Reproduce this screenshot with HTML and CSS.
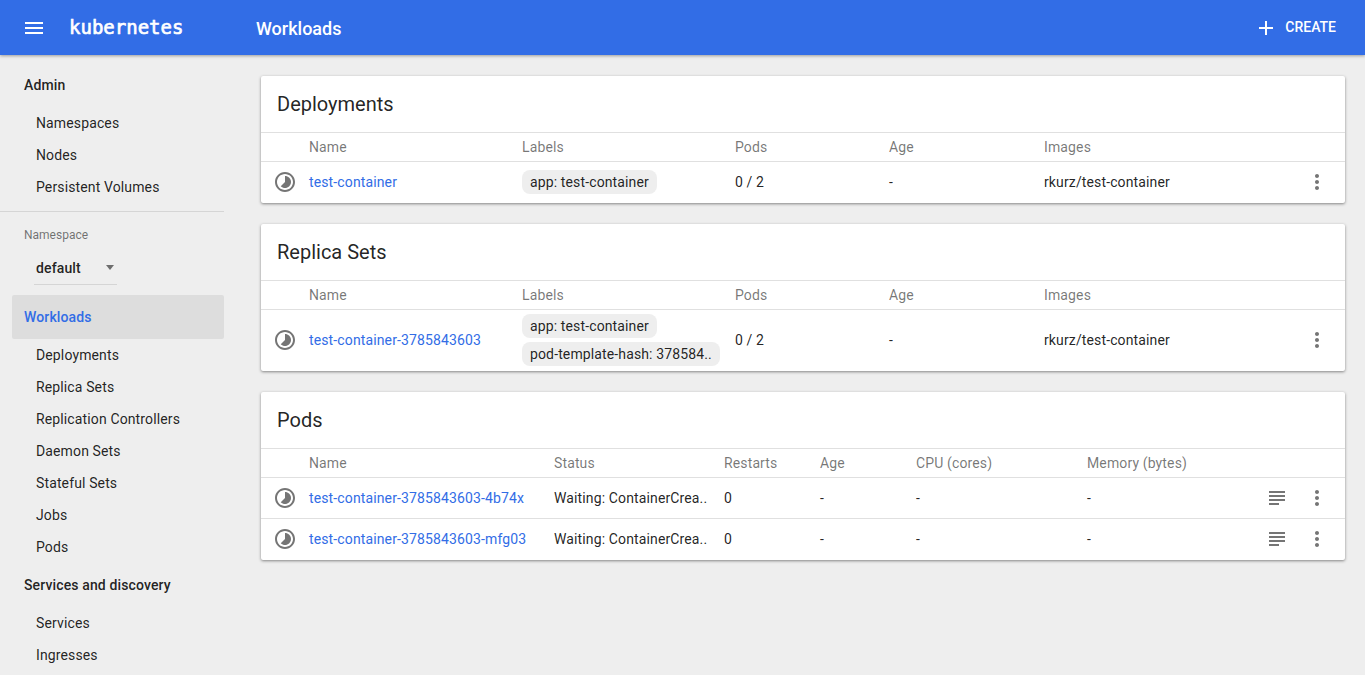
FILE: index.html
```html
<!DOCTYPE html>
<html lang="en">
<head>
<meta charset="utf-8">
<title>Workloads - Kubernetes Dashboard</title>
<link rel="stylesheet" href="styles.css">
</head>
<body>
<header class="toolbar">
  <svg class="icon menu-icon" viewBox="0 0 24 24"><path d="M3 18h18v-2H3v2zm0-5h18v-2H3v2zm0-7v2h18V6H3z"/></svg>
  <span class="logo">kubernetes</span>
  <h1 class="page-title">Workloads</h1>
  <button class="create"><svg class="icon" viewBox="0 0 24 24"><path d="M19 13h-6v6h-2v-6H5v-2h6V5h2v6h6v2z"/></svg><span>CREATE</span></button>
</header>
<div class="layout">
  <nav class="sidebar">
    <div class="nav-head">Admin</div>
    <a class="nav-item">Namespaces</a>
    <a class="nav-item">Nodes</a>
    <a class="nav-item">Persistent Volumes</a>
    <hr class="nav-sep">
    <div class="ns-label">Namespace</div>
    <div class="ns-select"><span>default</span><i class="caret"></i></div>
    <div class="nav-head nav-active">Workloads</div>
    <a class="nav-item">Deployments</a>
    <a class="nav-item">Replica Sets</a>
    <a class="nav-item">Replication Controllers</a>
    <a class="nav-item">Daemon Sets</a>
    <a class="nav-item">Stateful Sets</a>
    <a class="nav-item">Jobs</a>
    <a class="nav-item">Pods</a>
    <div class="nav-head">Services and discovery</div>
    <a class="nav-item">Services</a>
    <a class="nav-item">Ingresses</a>
  </nav>
  <main class="content">
    <section class="card">
      <h2 class="card-title">Deployments</h2>
      <div class="row head cols-a"><span></span><span>Name</span><span>Labels</span><span>Pods</span><span>Age</span><span>Images</span><span></span></div>
      <div class="row cols-a">
        <svg class="icon status" viewBox="0 0 24 24"><path d="M16.24 7.76C15.07 6.59 13.54 6 12 6v6l-4.24 4.24c2.34 2.34 6.14 2.34 8.49 0 2.34-2.34 2.34-6.14-.01-8.48zM12 2C6.48 2 2 6.48 2 12s4.48 10 10 10 10-4.48 10-10S17.52 2 12 2zm0 18c-4.42 0-8-3.58-8-8s3.58-8 8-8 8 3.58 8 8-3.58 8-8 8z"/></svg>
        <a class="link">test-container</a>
        <div class="chips"><span class="chip">app: test-container</span></div>
        <span>0 / 2</span><span>-</span><span>rkurz/test-container</span>
        <div class="actions"><svg class="icon" viewBox="0 0 24 24"><path d="M12 8c1.1 0 2-.9 2-2s-.9-2-2-2-2 .9-2 2 .9 2 2 2zm0 2c-1.1 0-2 .9-2 2s.9 2 2 2 2-.9 2-2-.9-2-2-2zm0 6c-1.1 0-2 .9-2 2s.9 2 2 2 2-.9 2-2-.9-2-2-2z"/></svg></div>
      </div>
    </section>
    <section class="card">
      <h2 class="card-title">Replica Sets</h2>
      <div class="row head cols-a"><span></span><span>Name</span><span>Labels</span><span>Pods</span><span>Age</span><span>Images</span><span></span></div>
      <div class="row cols-a">
        <svg class="icon status" viewBox="0 0 24 24"><path d="M16.24 7.76C15.07 6.59 13.54 6 12 6v6l-4.24 4.24c2.34 2.34 6.14 2.34 8.49 0 2.34-2.34 2.34-6.14-.01-8.48zM12 2C6.48 2 2 6.48 2 12s4.48 10 10 10 10-4.48 10-10S17.52 2 12 2zm0 18c-4.42 0-8-3.58-8-8s3.58-8 8-8 8 3.58 8 8-3.58 8-8 8z"/></svg>
        <a class="link">test-container-3785843603</a>
        <div class="chips"><span class="chip">app: test-container</span><span class="chip">pod-template-hash: 378584..</span></div>
        <span>0 / 2</span><span>-</span><span>rkurz/test-container</span>
        <div class="actions"><svg class="icon" viewBox="0 0 24 24"><path d="M12 8c1.1 0 2-.9 2-2s-.9-2-2-2-2 .9-2 2 .9 2 2 2zm0 2c-1.1 0-2 .9-2 2s.9 2 2 2 2-.9 2-2-.9-2-2-2zm0 6c-1.1 0-2 .9-2 2s.9 2 2 2 2-.9 2-2-.9-2-2-2z"/></svg></div>
      </div>
    </section>
    <section class="card">
      <h2 class="card-title">Pods</h2>
      <div class="row head cols-b"><span></span><span>Name</span><span>Status</span><span>Restarts</span><span>Age</span><span>CPU (cores)</span><span>Memory (bytes)</span><span></span></div>
      <div class="row cols-b">
        <svg class="icon status" viewBox="0 0 24 24"><path d="M16.24 7.76C15.07 6.59 13.54 6 12 6v6l-4.24 4.24c2.34 2.34 6.14 2.34 8.49 0 2.34-2.34 2.34-6.14-.01-8.48zM12 2C6.48 2 2 6.48 2 12s4.48 10 10 10 10-4.48 10-10S17.52 2 12 2zm0 18c-4.42 0-8-3.58-8-8s3.58-8 8-8 8 3.58 8 8-3.58 8-8 8z"/></svg>
        <a class="link">test-container-3785843603-4b74x</a>
        <span>Waiting: ContainerCrea..</span><span>0</span><span>-</span><span>-</span><span>-</span>
        <div class="actions"><svg class="icon" viewBox="0 0 24 24"><path d="M14 17H4v2h10v-2zm6-8H4v2h16V9zM4 15h16v-2H4v2zM4 5v2h16V5H4z"/></svg><svg class="icon" viewBox="0 0 24 24"><path d="M12 8c1.1 0 2-.9 2-2s-.9-2-2-2-2 .9-2 2 .9 2 2 2zm0 2c-1.1 0-2 .9-2 2s.9 2 2 2 2-.9 2-2-.9-2-2-2zm0 6c-1.1 0-2 .9-2 2s.9 2 2 2 2-.9 2-2-.9-2-2-2z"/></svg></div>
      </div>
      <div class="row cols-b">
        <svg class="icon status" viewBox="0 0 24 24"><path d="M16.24 7.76C15.07 6.59 13.54 6 12 6v6l-4.24 4.24c2.34 2.34 6.14 2.34 8.49 0 2.34-2.34 2.34-6.14-.01-8.48zM12 2C6.48 2 2 6.48 2 12s4.48 10 10 10 10-4.48 10-10S17.52 2 12 2zm0 18c-4.42 0-8-3.58-8-8s3.58-8 8-8 8 3.58 8 8-3.58 8-8 8z"/></svg>
        <a class="link">test-container-3785843603-mfg03</a>
        <span>Waiting: ContainerCrea..</span><span>0</span><span>-</span><span>-</span><span>-</span>
        <div class="actions"><svg class="icon" viewBox="0 0 24 24"><path d="M14 17H4v2h10v-2zm6-8H4v2h16V9zM4 15h16v-2H4v2zM4 5v2h16V5H4z"/></svg><svg class="icon" viewBox="0 0 24 24"><path d="M12 8c1.1 0 2-.9 2-2s-.9-2-2-2-2 .9-2 2 .9 2 2 2zm0 2c-1.1 0-2 .9-2 2s.9 2 2 2 2-.9 2-2-.9-2-2-2zm0 6c-1.1 0-2 .9-2 2s.9 2 2 2 2-.9 2-2-.9-2-2-2z"/></svg></div>
      </div>
    </section>
  </main>
</div>
</body>
</html>
```
FILE: styles.css
```css
* { box-sizing: border-box; }
html, body { height: 100%; }
body {
  margin: 0;
  height: 675px;
  overflow: hidden;
  display: flex;
  flex-direction: column;
  background: #eeeeee;
  color: rgba(0, 0, 0, 0.87);
  font: 14px/20px Roboto, sans-serif;
  letter-spacing: 0.13px;
}
.icon { width: 24px; height: 24px; fill: currentColor; display: block; flex: none; }

.toolbar {
  flex: none;
  position: relative;
  z-index: 2;
  height: 55px;
  display: flex;
  align-items: center;
  padding: 0 16px 0 22px;
  background: #326de6;
  color: #fff;
  box-shadow: 0 1px 3px rgba(0, 0, 0, 0.35);
}
.menu-icon { width: 24px; height: 24px; }
.logo {
  margin-left: 23px;
  padding-bottom: 2px;
  width: 187px;
  letter-spacing: 0;
  font: 400 19px/24px "DejaVu Sans Mono", monospace;
  -webkit-text-stroke: 0.65px #fff;
}
.page-title {
  margin: 0;
  padding-top: 2px;
  font-size: 18px;
  font-weight: 500;
  line-height: 24px;
  letter-spacing: 0;
}
.create {
  margin-left: auto;
  display: flex;
  align-items: center;
  gap: 7px;
  padding: 0 13px 0 0;
  height: 36px;
  border: 0;
  background: none;
  color: #fff;
  letter-spacing: 0;
  font: 500 14px/20px Roboto, sans-serif;
}
.create span { position: relative; top: -1px; }

.layout { flex: 1; display: flex; min-height: 0; }
.sidebar { flex: none; width: 224px; padding-top: 8px; }
.nav-head {
  height: 44px;
  padding-left: 24px;
  display: flex;
  align-items: center;
  font-weight: 500;
}
.nav-item {
  display: flex;
  align-items: center;
  height: 32px;
  padding-left: 36px;
  color: rgba(0, 0, 0, 0.87);
}
.nav-sep { margin: 8px 0 0; border: 0; border-top: 1px solid #d5d5d5; }
.ns-label {
  margin-top: 13px;
  padding-left: 24px;
  font-size: 12px;
  line-height: 20px;
  letter-spacing: 0;
  color: rgba(0, 0, 0, 0.54);
}
.ns-select {
  margin: 10px 0 10px 34px;
  width: 83px;
  height: 30px;
  padding: 0 2px 3px 2px;
  display: flex;
  align-items: center;
  justify-content: space-between;
  border-bottom: 1px solid #d5d5d5;
  font-weight: 500;
}
.caret {
  width: 0;
  height: 0;
  border-left: 4.5px solid transparent;
  border-right: 4.5px solid transparent;
  border-top: 5px solid rgba(0, 0, 0, 0.54);
  margin: 0 1px 2px 0;
}
.nav-active {
  margin-left: 12px;
  padding-left: 12px;
  background: #dddddd;
  color: #326de6;
  border-radius: 2px;
}

.content {
  flex: 1;
  min-width: 0;
  padding: 21px 20px 0 37px;
  display: flex;
  flex-direction: column;
  gap: 21px;
}
.card {
  background: #fff;
  border-radius: 2px;
  padding-bottom: 1px;
  box-shadow: 0 1px 3px rgba(0, 0, 0, 0.45);
}
.card-title {
  margin: 0;
  height: 56px;
  padding-left: 16px;
  display: flex;
  align-items: center;
  font-size: 20px;
  font-weight: 400;
  letter-spacing: 0;
}
.row {
  display: grid;
  align-items: center;
  border-top: 1px solid #e0e0e0;
  min-height: 41px;
}
.cols-a { grid-template-columns: 48px 213px 213px 154px 155px 1fr 80px; }
.cols-b { grid-template-columns: 48px 245px 170px 96px 96px 171px 1fr 96px; }
.head { min-height: 29px; color: rgba(0, 0, 0, 0.54); }
.status { margin-left: 12px; color: #757575; }
.link { color: #326de6; }
.chips { padding: 4px 0; display: flex; flex-direction: column; align-items: flex-start; gap: 4px; }
.chip {
  height: 24px;
  padding: 2px 8px;
  background: #eeeeee;
  border-radius: 8px;
  white-space: nowrap;
}
.actions { display: flex; justify-content: flex-end; gap: 16px; padding-right: 16px; color: #757575; }
```
